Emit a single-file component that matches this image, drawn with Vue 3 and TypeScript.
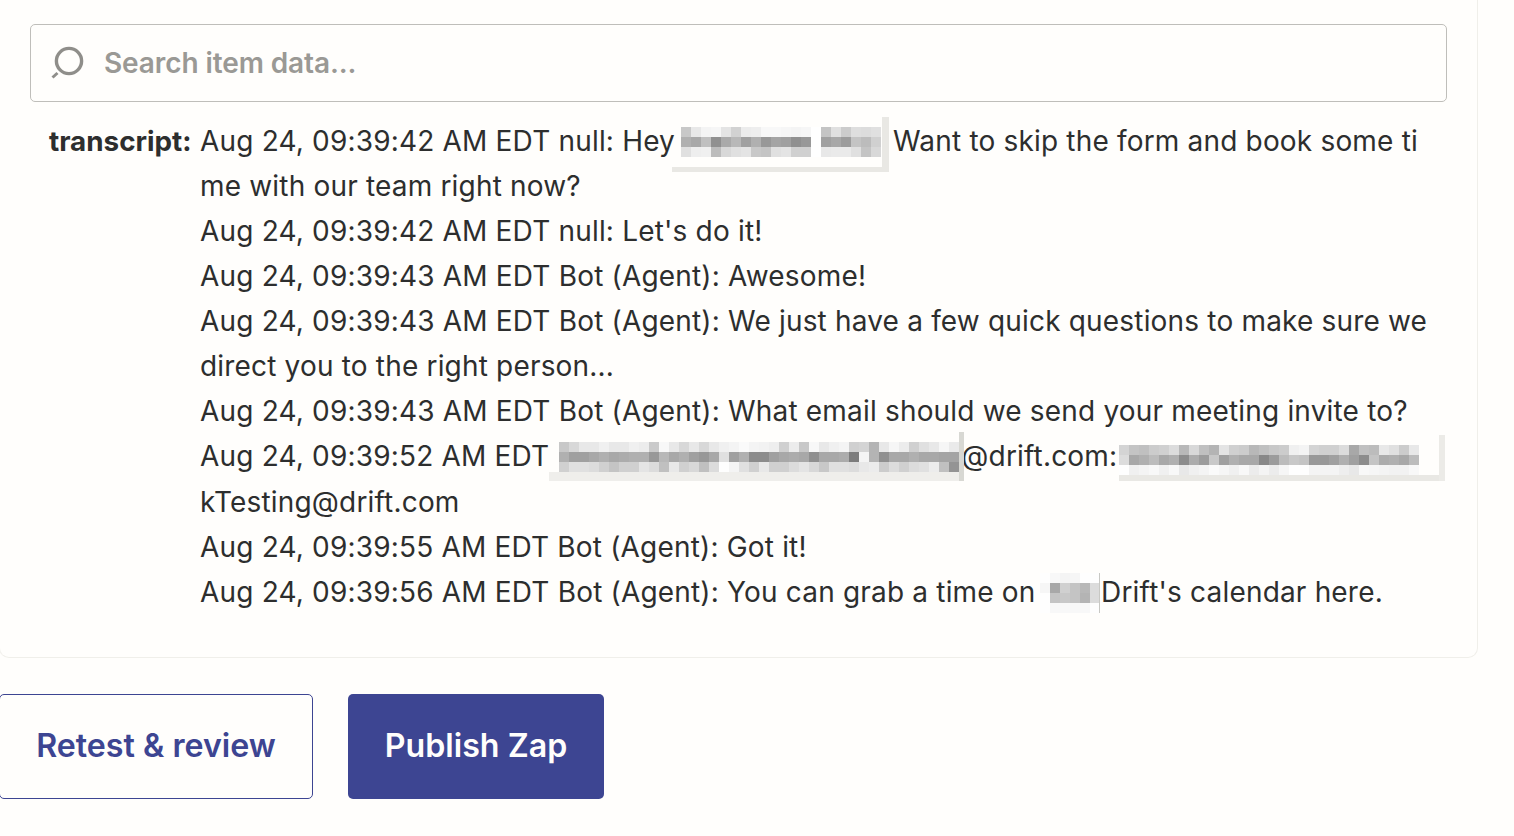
<template>
  <div class="page">
    <section class="card">
      <label class="search">
        <svg class="search-icon" width="36" height="38" viewBox="0 0 36 38" fill="none">
          <circle cx="19" cy="17" r="12.6" stroke="#8f8e8a" stroke-width="3.4" />
          <path d="M2.5 33.5 L7.5 29" stroke="#8f8e8a" stroke-width="3" />
        </svg>
        <input type="text" placeholder="Search item data..." />
      </label>

      <div class="item">
        <div class="key">transcript:</div>
        <div class="value">
          <div class="line">Aug 24, 09:39:42 AM EDT null: Hey<span class="redact r1"><span class="blur">
            <i v-for="(c, i) in cells(heyName)" :key="i" :style="{ background: c }"></i>
          </span></span>Want to skip the form and book some ti</div>
          <div class="line">me with our team right now?</div>
          <div class="line">Aug 24, 09:39:42 AM EDT null: Let's do it!</div>
          <div class="line">Aug 24, 09:39:43 AM EDT Bot (Agent): Awesome!</div>
          <div class="line">Aug 24, 09:39:43 AM EDT Bot (Agent): We just have a few quick questions to make sure we</div>
          <div class="line">direct you to the right person...</div>
          <div class="line">Aug 24, 09:39:43 AM EDT Bot (Agent): What email should we send your meeting invite to?</div>
          <div class="line">Aug 24, 09:39:52 AM EDT<span class="redact r2"><span class="blur">
            <i v-for="(c, i) in cells(userName)" :key="i" :style="{ background: c }"></i>
          </span></span>@drift.com:<span class="redact r3"><span class="blur">
            <i v-for="(c, i) in cells(userMail)" :key="i" :style="{ background: c }"></i>
          </span></span></div>
          <div class="line wrapped">kTesting@drift.com</div>
          <div class="line">Aug 24, 09:39:55 AM EDT Bot (Agent): Got it!</div>
          <div class="line">Aug 24, 09:39:56 AM EDT Bot (Agent): You can grab a time on<span class="redact r4"><span class="blur">
            <i v-for="(c, i) in cells(ownerName)" :key="i" :style="{ background: c }"></i>
          </span></span>Drift's calendar here.</div>
        </div>
      </div>
    </section>

    <div class="actions">
      <button class="btn secondary">Retest &amp; review</button>
      <button class="btn primary">Publish Zap</button>
    </div>
  </div>
</template>

<script setup lang="ts">
// grey levels of the pixelated names, one string per row of blocks
const heyName = [
  'c8 e8 f4 f6 e4 d2 ec ee f8 f8 f6 f4 f6 ff c4 e0 cc de dc e0',
  'b0 a8 c0 90 aa b8 a0 b0 98 a4 a0 90 98 ff a0 a8 9c c4 bc d0',
  'e0 ee f0 bc d8 e0 e4 c8 c4 e0 e4 d0 d0 ff e8 ea ea e0 c4 d8',
]
const userName = [
  'c8 d8 e8 e8 f0 e8 e8 f0 ec ca f8 e8 d8 e8 d8 e8 f0 f4 fa f4 f2 ee d0 ec c8 f8 e8 f0 f4 d0 d4 b4 e8 f6 ec d0 e0 e8 f6 ea',
  'b0 a0 a0 a8 b0 a8 ac b0 b0 98 b8 a8 b0 a0 98 a8 e0 a0 b0 8c 8c a0 a8 ac a8 90 a8 a8 ac 7c f4 b4 90 a8 a8 b0 a8 a8 a4 a4',
  'd0 e0 e0 dc d0 c4 d0 d0 e4 dc c0 e8 d0 d8 c0 dc fe f4 e0 d0 e8 d0 d0 dc e4 d8 c8 e0 e0 dc e8 ec cc dc d0 dc e0 ec c0 94',
]
const userMail = [
  'd4 c4 c0 cc d0 dc b8 d8 c0 b4 e4 d0 cc b8 c0 c8 cc f0 f4 d4 d0 d0 dc a8 c0 bc e8 e0 cc e8',
  'dc a8 b0 bc a8 b0 8c ac 9c c8 a0 b0 a8 a8 88 9c bc c8 c4 98 98 a0 b0 a0 8c c4 ac b0 a8 bc',
  'fe f0 f4 f8 f0 f8 e8 f0 f4 fa f6 f0 f8 ec f4 ec f6 fe fe f4 f4 f4 ee e8 f8 f6 f4 f2 f2 f8',
]
const ownerName = [
  'fe f8 f4 f6 fe fe',
  'f6 a8 d0 c4 b8 dc',
  'fe c4 c8 c4 b4 dc',
  'fe f8 f8 f8 f8 fe',
]

function cells(rows: string[]): string[] {
  return rows.join(' ').split(' ').map((g) => `#${g}${g}${g}`)
}
</script>

<style scoped>
.page {
  width: 1514px;
  height: 836px;
  overflow: hidden;
  font-family: Inter, "Liberation Sans", sans-serif;
  color: #2d2e2e;
}

.card {
  width: 1479px;
  height: 678px;
  margin-top: -20px;
  padding: 43px 30px 0;
  box-sizing: border-box;
  border: 1px solid #f0efea;
  border-left-color: #f3f2ee;
  border-radius: 10px;
  margin-left: -1px;
}

.search {
  display: flex;
  align-items: center;
  width: 1417px;
  height: 78px;
  box-sizing: border-box;
  border: 1.5px solid #bfbeba;
  border-radius: 5px;
  padding-left: 19px;
}

.search-icon {
  flex: none;
}

.search input {
  flex: 1;
  margin-left: 18px;
  border: 0;
  outline: 0;
  padding: 0;
  background: transparent;
  font: 600 28px Inter, "Liberation Sans", sans-serif;
  letter-spacing: -0.1px;
}

.search input::placeholder {
  color: #9a9995;
  opacity: 1;
}

.item {
  display: flex;
  margin-top: 17px;
  padding-left: 19px;
  font-size: 28px;
  line-height: 45px;
}

.key {
  width: 151px;
  flex: none;
  font-size: 27.8px;
  font-weight: 700;
  white-space: nowrap;
}

.line {
  white-space: nowrap;
  height: 45px;
  letter-spacing: 0.18px;
}

.wrapped {
  margin-top: 1px;
}

/* slot in the text line; the blocks hang over it */
.redact {
  display: inline-block;
  position: relative;
  height: 45px;
  vertical-align: top;
}

.blur {
  position: absolute;
  display: grid;
  grid-auto-rows: 10px;
  grid-template-columns: repeat(var(--n), 10px);
}

.blur i {
  display: block;
}

/* leftover smear from the redaction tool */
.redact::before,
.redact::after {
  content: "";
  position: absolute;
  background: #e9e8e4;
}

.r1 {
  width: 221px;
  margin-left: -3px;
}

.r1 .blur {
  --n: 20;
  left: 9px;
  top: 8px;
}

.r1::before {
  left: 0;
  width: 217px;
  top: 48px;
  height: 5px;
}

.r1::after {
  left: 210px;
  width: 7px;
  top: -2px;
  height: 55px;
}

.r2 {
  width: 412px;
}

.r2 .blur {
  --n: 40;
  left: 10px;
  top: 8px;
}

.r2::before {
  left: 0;
  width: 410px;
  top: 38px;
  height: 9px;
  background: #efeeeb;
}

.r2::after {
  left: 410px;
  width: 5px;
  top: -2px;
  height: 49px;
  background: #d8d8d3;
}

.r3 {
  width: 330px;
  margin-left: -1px;
}

.r3 .blur {
  --n: 30;
  left: 3px;
  top: 11px;
}

.r3::before {
  left: 3px;
  width: 326px;
  top: 41px;
  height: 6px;
}

.r3::after {
  left: 323px;
  width: 6px;
  top: 1px;
  height: 46px;
  background: #ecebe7;
}

.r4 {
  width: 65.5px;
}

.r4 .blur {
  --n: 6;
  left: 4px;
  top: 3px;
}

.r4::after {
  left: 63px;
  width: 1px;
  top: 3px;
  height: 40px;
  background: #c8c8c4;
}

.r4::before {
  display: none;
}

.actions {
  display: flex;
  gap: 35px;
  margin-top: 36px;
  margin-left: -1px;
}

.btn {
  height: 105px;
  box-sizing: border-box;
  border-radius: 5px;
  padding: 0 0 2px;
  font: 600 32.2px Inter, "Liberation Sans", sans-serif;
  cursor: pointer;
}

.secondary {
  width: 314px;
  background: transparent;
  border: 1.5px solid #3d4592;
  color: #3d4592;
}

.primary {
  width: 256px;
  background: #3d4592;
  border: 0;
  color: #fffefc;
}
</style>

<style>
body {
  background: #fffefc;
  overflow: hidden;
}
</style>
